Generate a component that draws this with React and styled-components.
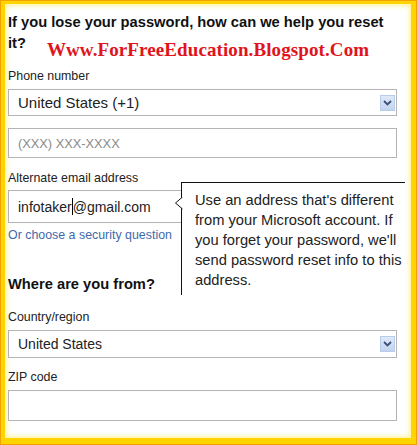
import React from 'react';
import styled, { createGlobalStyle } from 'styled-components';

const Global = createGlobalStyle`
html, body { margin: 0; padding: 0; background: #fff; }
body { font-family: "Liberation Sans", Arial, sans-serif; }
`

const Frame = styled.div`
width: 417px;
height: 445px;
box-sizing: border-box;
border: 1px solid #f2a200;
`

const Inner = styled.div`
position: relative;
height: 100%;
box-sizing: border-box;
border-style: solid;
border-color: #ffd400;
border-width: 3px 5px 6px 4px;
box-shadow: inset 0 0 4px 2px #fff3a0;
padding: 8px 14px 0 3px;
color: #111;
`

const Heading = styled.h2`
margin: 0;
font-size: 14.7px;
line-height: 20px;
font-weight: bold;
color: #111;
`

const Watermark = styled.span`
position: relative;
top: 8px;
margin-left: 21px;
font-family: "Liberation Serif", "Times New Roman", serif;
font-weight: bold;
font-size: 19px;
color: #e0141c;
letter-spacing: 0.1px;
`

const Label = styled.div`
font-size: 12.4px;
line-height: 16px;
color: #222;
margin-top: ${({ $gap }) => $gap}px;
`

const Field = styled.div`
position: relative;
box-sizing: border-box;
height: ${({ $h }) => $h}px;
margin-top: ${({ $gap }) => $gap}px;
border: 1px solid #b4b4b4;
display: flex;
align-items: center;
padding: 0 1px 0 9px;
font-size: ${({ $fs }) => $fs || 15}px;
color: ${({ $muted }) => ($muted ? '#8a8a8a' : '#222')};
background: #fff;
`

const Grow = styled.span`
flex: 1;
`

const Caret = styled.span`
display: inline-block;
width: 1px;
height: 17px;
background: #000;
vertical-align: -3px;
`

const DropBtn = styled.span`
width: 15px;
height: 16px;
box-sizing: border-box;
border: 1px solid #b8cbe8;
background: linear-gradient(#dfe9f8, #c2d4ef);
display: flex;
align-items: center;
justify-content: center;
`

const Link = styled.div`
font-size: 12.4px;
line-height: 16px;
color: #3f6aab;
margin-top: 4px;
`

const SubHeading = styled.h3`
margin: 31px 0 0;
font-size: 14.7px;
line-height: 20px;
font-weight: bold;
color: #111;
`

const Tip = styled.div`
position: absolute;
left: 176px;
top: 178px;
width: 224px;
height: 113px;
box-sizing: border-box;
border-top: 1px solid #111;
border-left: 1px solid #111;
background: #fff;
padding: 7px 0 0 13px;
font-size: 14.7px;
line-height: 20px;
color: #222;
`

const TipArrow = styled.svg`
position: absolute;
left: -7px;
top: 14px;
`

const Chevron = () => (
    <svg width="9" height="6" viewBox="0 0 9 6">
        <path d="M1 1 L4.5 4.5 L8 1" fill="none" stroke="#3d4f7a" strokeWidth="1.8" />
    </svg>
)

export default function App() {
    return (
        <>
            <Global />
            <Frame>
                <Inner>
                    <Heading>
                        If you lose your password, how can we help you reset<br />
                        it?<Watermark>Www.ForFreeEducation.Blogspot.Com</Watermark>
                    </Heading>

                    <Label $gap={15}>Phone number</Label>
                    <Field $h={27} $gap={5}>
                        <Grow>United States (+1)</Grow>
                        <DropBtn><Chevron /></DropBtn>
                    </Field>
                    <Field $h={30} $gap={12} $fs={12.8} $muted>(XXX) XXX-XXXX</Field>

                    <Label $gap={12}>Alternate email address</Label>
                    <Field $h={33} $gap={4} $fs={14}>
                        <span>infotaker<Caret />@gmail.com</span>
                    </Field>
                    <Link>Or choose a security question</Link>

                    <SubHeading>Where are you from?</SubHeading>

                    <Label $gap={15}>Country/region</Label>
                    <Field $h={28} $gap={5} $fs={14}>
                        <Grow>United States</Grow>
                        <DropBtn><Chevron /></DropBtn>
                    </Field>

                    <Label $gap={11}>ZIP code</Label>
                    <Field $h={31} $gap={5} />

                    <Tip>
                        <TipArrow width="8" height="14" viewBox="0 0 8 14">
                            <path d="M7.5 0 L0.5 6 L7.5 12 Z" fill="#fff" />
                            <path d="M7.5 0 L0.5 6 L7.5 12" fill="none" stroke="#111" strokeWidth="1" />
                        </TipArrow>
                        Use an address that's different from your Microsoft account. If you forget your password, we'll send password reset info to this address.
                    </Tip>
                </Inner>
            </Frame>
        </>
    )
}
